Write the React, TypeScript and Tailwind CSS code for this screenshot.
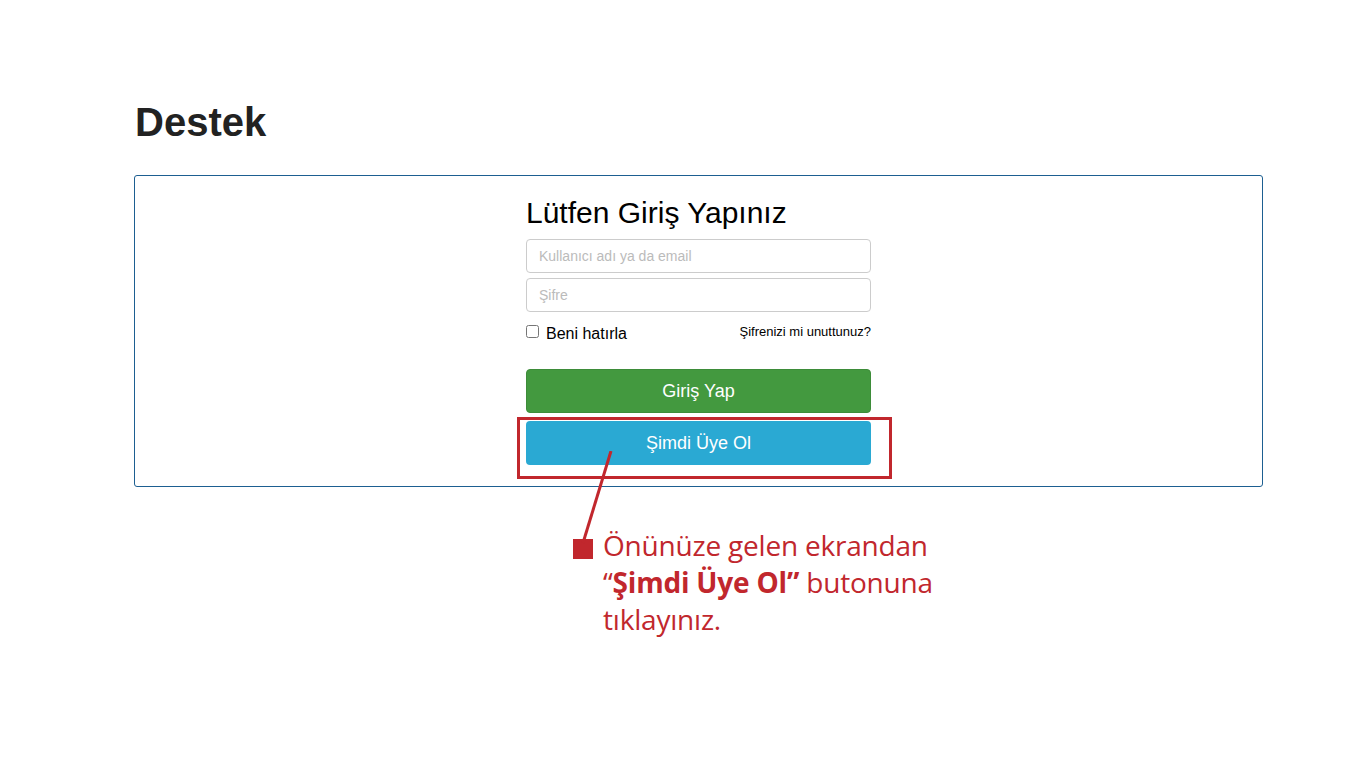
import React from 'react';

export default function App() {
  return (
    <div className="min-h-[768px] w-[1366px] bg-white font-['Liberation_Sans',Arial,sans-serif]">
      <div className="ml-[134px] w-[1129px] pt-[98px]">
        <h1 className="pl-px text-[40px] font-bold leading-[48px] text-[#222]">Destek</h1>

        {/* Login panel */}
        <div className="relative mt-[29px] rounded-[3px] border border-[#1d5f91] pt-[20px] pb-[21px]">
          <div className="mx-auto w-[345px]">
            <h2 className="text-[30px] leading-[34px] text-black">Lütfen Giriş Yapınız</h2>
            <div className="mt-[9px] flex flex-col gap-[5px]">
              <input
                placeholder="Kullanıcı adı ya da email"
                className="h-[34px] w-full rounded-[4px] border border-[#ccc] px-[12px] text-[14px] placeholder:text-[#bbb] outline-none"
              />
              <input
                placeholder="Şifre"
                className="h-[34px] w-full rounded-[4px] border border-[#ccc] px-[12px] text-[14px] placeholder:text-[#bbb] outline-none"
              />
            </div>
            <div className="mt-[8px] flex items-start justify-between">
              <label className="flex items-center gap-[7px] text-[16px] leading-[18px] text-black">
                <input type="checkbox" className="h-[13px] w-[13px]" />
                <span className="mt-[5px]">Beni hatırla</span>
              </label>
              <a className="mt-[4px] text-[13px] leading-[16px] text-black">Şifrenizi mi unuttunuz?</a>
            </div>
            <button className="mt-[26px] h-[44px] w-full rounded-[4px] border border-[#3d8c39] bg-[#43993f] text-[18px] text-white">
              Giriş Yap
            </button>
            <button className="mt-[8px] h-[44px] w-full rounded-[4px] bg-[#2aa9d3] text-[18px] text-white">
              Şimdi Üye Ol
            </button>
          </div>

          {/* highlight box */}
          <div className="absolute left-[382px] top-[241px] h-[62px] w-[375px] border-[3px] border-[#c1272d]" />
        </div>

        {/* callout */}
        <div className="relative ml-[439px] mt-[52px] flex items-start gap-[10px]">
          <svg className="absolute -left-[10px] -top-[88px]" width="60" height="100" viewBox="0 0 60 100">
            <line x1="48" y1="0" x2="20" y2="92" stroke="#c1272d" strokeWidth="3" />
          </svg>
          <div className="h-[20px] w-[20px] shrink-0 bg-[#c1272d]" />
          <p className="-mt-[12px] font-['Open_Sans',sans-serif] text-[28px] leading-[37px] tracking-[-0.2px] text-[#c1272d]">
            Önünüze gelen ekrandan
            <br />
            “<b className="font-bold">Şimdi Üye Ol”</b> butonuna
            <br />
            tıklayınız.
          </p>
        </div>
      </div>
    </div>
  );
}
